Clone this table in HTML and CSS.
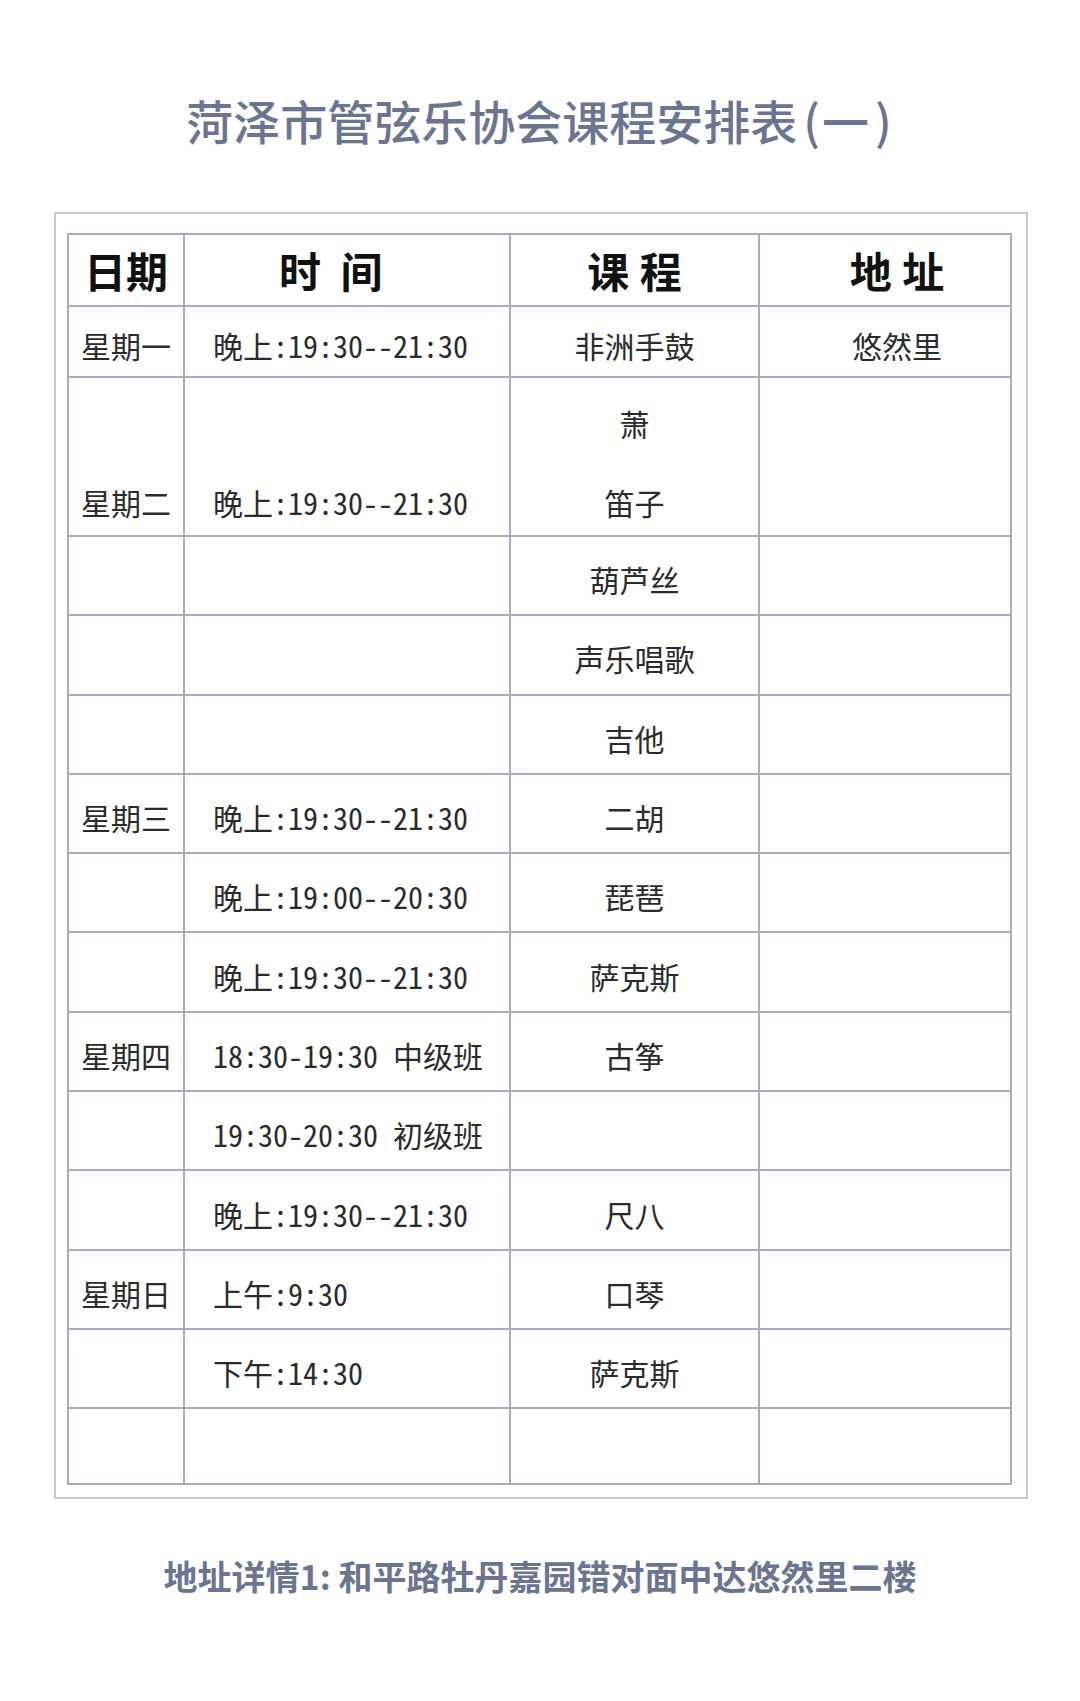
FILE: index.html
```html
<!DOCTYPE html>
<html lang="zh-CN">
<head>
<meta charset="utf-8">
<title>菏泽市管弦乐协会课程安排表(一)</title>
<link rel="stylesheet" href="styles.css">
</head>
<body>
<h1 class="title">菏泽市管弦乐协会课程安排表<span class="paren">(</span>一<span class="paren">)</span></h1>
<div class="frame">
  <table class="schedule">
    <colgroup>
      <col class="c-day"><col class="c-time"><col class="c-course"><col class="c-addr">
    </colgroup>
    <thead>
      <tr class="r-head">
        <th class="h-day">日期</th>
        <th class="h-time">时 间</th>
        <th class="h-course">课 程</th>
        <th class="h-addr">地 址</th>
      </tr>
    </thead>
    <tbody>
      <tr class="r-first">
        <td class="day">星期一</td><td class="time">晚上:19:30--21:30</td><td class="course">非洲手鼓</td><td class="addr">悠然里</td>
      </tr>
      <tr class="r-double">
        <td class="day low">星期二</td><td class="time low">晚上:19:30--21:30</td>
        <td class="course"><div class="sub">萧</div><div class="sub second">笛子</div></td>
        <td class="addr"></td>
      </tr>
      <tr><td class="day"></td><td class="time"></td><td class="course">葫芦丝</td><td class="addr"></td></tr>
      <tr><td class="day"></td><td class="time"></td><td class="course">声乐唱歌</td><td class="addr"></td></tr>
      <tr><td class="day"></td><td class="time"></td><td class="course">吉他</td><td class="addr"></td></tr>
      <tr><td class="day">星期三</td><td class="time">晚上:19:30--21:30</td><td class="course">二胡</td><td class="addr"></td></tr>
      <tr><td class="day"></td><td class="time">晚上:19:00--20:30</td><td class="course">琵琶</td><td class="addr"></td></tr>
      <tr><td class="day"></td><td class="time">晚上:19:30--21:30</td><td class="course">萨克斯</td><td class="addr"></td></tr>
      <tr><td class="day">星期四</td><td class="time">18:30-19:30 中级班</td><td class="course">古筝</td><td class="addr"></td></tr>
      <tr><td class="day"></td><td class="time">19:30-20:30 初级班</td><td class="course"></td><td class="addr"></td></tr>
      <tr><td class="day"></td><td class="time">晚上:19:30--21:30</td><td class="course">尺八</td><td class="addr"></td></tr>
      <tr><td class="day">星期日</td><td class="time">上午:9:30</td><td class="course">口琴</td><td class="addr"></td></tr>
      <tr><td class="day"></td><td class="time">下午:14:30</td><td class="course">萨克斯</td><td class="addr"></td></tr>
      <tr class="r-last"><td class="day"></td><td class="time"></td><td class="course"></td><td class="addr"></td></tr>
    </tbody>
  </table>
</div>
<p class="footer">地址详情1: 和平路牡丹嘉园错对面中达悠然里二楼</p>
</body>
</html>
```

FILE: styles.css
```css
* { box-sizing: border-box; }

html, body {
  margin: 0;
  padding: 0;
  background: #ffffff;
}

body {
  width: 1080px;
  font-family: "Noto Sans CJK SC", "Noto Sans", sans-serif;
  color: #2b2b2b;
}

.title {
  margin: 90px 0 0 0;
  height: 60px;
  line-height: 60px;
  font-size: 47px;
  font-weight: 500;
  color: #6b7591;
  text-align: center;
  letter-spacing: 0;
}

.paren {
  margin: 0 2px 0 6px;
}

.frame {
  margin: 62px 0 0 54px;
  width: 974px;
  border: 2px solid #c8c9d0;
  padding: 19px 0 12px 11px;
}

.schedule {
  width: 945px;
  table-layout: fixed;
  border-collapse: separate;
  border-spacing: 0;
  border-top: 2px solid #a9abbf;
  border-left: 2px solid #a9abbf;
}

.c-day { width: 116px; }
.c-time { width: 326px; }
.c-course { width: 249px; }
.c-addr { width: 252px; }

th, td {
  border-right: 2px solid #a9abbf;
  border-bottom: 2px solid #a9abbf;
  padding: 8px 0 0 0;
  height: 79.3px;
  vertical-align: middle;
  font-size: 30px;
  line-height: 45px;
  font-weight: 400;
  white-space: nowrap;
}

td.time {
  font-feature-settings: "hwid" 1;
}

.r-head th {
  height: 72px;
  padding: 0;
  font-size: 42px;
  line-height: 56px;
  font-weight: 700;
  color: #111111;
}

.h-day { text-align: center; }
.h-time { text-align: left; padding-left: 94px !important; word-spacing: 10px; }
.h-course { text-align: center; word-spacing: 1px; }
.h-addr { text-align: center; padding-left: 24px !important; word-spacing: 1px; }

.r-first td { height: 71px; }
.r-last td { height: 76px; }

.day { text-align: center; }
.time { text-align: left; padding-left: 28px; }
.course { text-align: center; }
.addr { text-align: center; padding-left: 24px; }

.r-double td {
  height: 159px;
  vertical-align: top;
  padding-top: 23px;
}

.r-double td.low { padding-top: 102px; }

.sub { line-height: 45px; }
.sub.second { margin-top: 34px; }

.footer {
  margin: 54px 0 0 0;
  text-align: center;
  font-size: 34px;
  line-height: 46px;
  font-weight: 700;
  color: #6b7591;
}
```
